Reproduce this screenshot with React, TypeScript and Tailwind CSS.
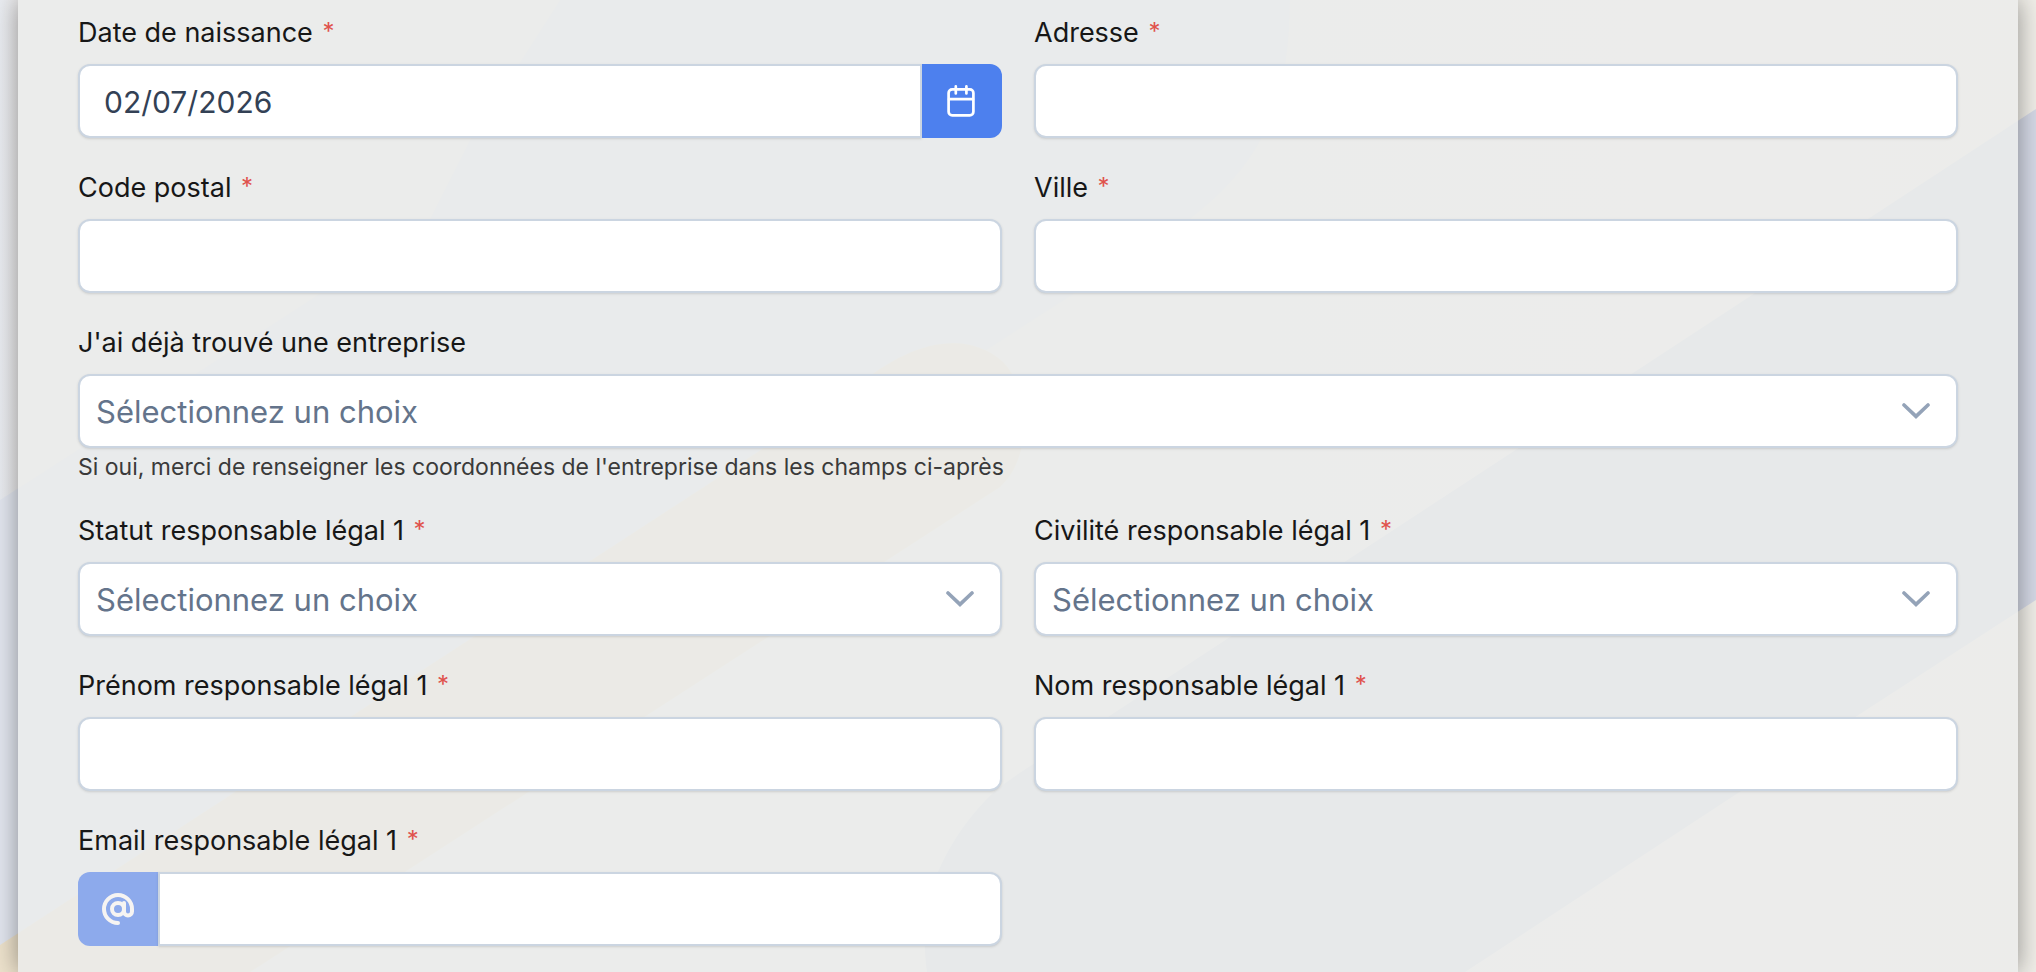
import { useId, type ReactNode } from "react";

const control =
  "h-[74px] w-full min-w-0 border-2 border-[#cbd5e1] bg-white shadow-sm outline-none";

function Backdrop() {
  return (
    <svg
      className="absolute inset-0 -z-10 h-full w-full"
      viewBox="0 0 2036 972"
      preserveAspectRatio="none"
      aria-hidden="true"
    >
      <defs>
        <linearGradient id="base" x1="0" y1="0" x2="1" y2="0">
          <stop offset="0" stopColor="#e9ecf1" />
          <stop offset="0.012" stopColor="#edebea" />
          <stop offset="0.2" stopColor="#ecebea" />
          <stop offset="0.4" stopColor="#e9edeb" />
          <stop offset="0.52" stopColor="#e9edeb" />
          <stop offset="0.62" stopColor="#eeecec" />
          <stop offset="1" stopColor="#f0eee8" />
        </linearGradient>
      </defs>
      <rect width="2036" height="972" fill="url(#base)" />
      <path
        d="M0 500 L310 300 L430 219 L470 140 L560 0 H1290 C1290 60 1280 110 1255 150 C1240 175 1215 200 1190 219 L940 380 L30 972 H0Z"
        fill="#e2e6ef"
      />
      <path
        d="M0 945 L850 392 C915 335 970 332 1003 362 C1032 392 1032 458 1000 487 L250 972 H0Z"
        fill="#ede2cc"
      />
      <path
        d="M2036 109 L1108 717 C1070 745 1034 760 995 791 C970 815 952 840 938 872 C925 902 922 935 927 972 H1465 L1741 791 L2036 600Z"
        fill="#d5d9e6"
      />
    </svg>
  );
}

function Field({
  label,
  required = true,
  wide = false,
  help,
  children,
}: {
  label: string;
  required?: boolean;
  wide?: boolean;
  help?: string;
  children: (id: string) => ReactNode;
}) {
  const id = useId();
  return (
    <div className={wide ? "col-span-2" : ""}>
      <label htmlFor={id} className="mb-2.5 block text-[27px] leading-[43px] text-[#171717]">
        {label}{" "}
        {required && (
          <span className="ml-0.5 align-[2px] text-[24px] leading-none text-[#e0524d]">*</span>
        )}
      </label>
      {children(id)}
      {help && <p className="mt-1.5 text-[23px] leading-[27px] text-[#3a3a3a]">{help}</p>}
    </div>
  );
}

function TextField({ label }: { label: string }) {
  return (
    <Field label={label}>
      {(id) => (
        <input id={id} type="text" className={`${control} rounded-xl px-6 text-[30px] text-[#334155]`} />
      )}
    </Field>
  );
}

function SelectField(props: { label: string; required?: boolean; wide?: boolean; help?: string }) {
  return (
    <Field {...props}>
      {(id) => (
        <div className="relative">
          <select
            id={id}
            className={`${control} appearance-none rounded-xl px-4 pt-0.5 text-[31px] text-[#64748b]`}
          >
            <option>Sélectionnez un choix</option>
          </select>
          <svg
            className="pointer-events-none absolute top-[29px] right-7 h-4 w-7"
            viewBox="0 0 28 16"
            fill="none"
            stroke="#94a3b8"
            strokeWidth="3.6"
            strokeLinecap="round"
            aria-hidden="true"
          >
            <path d="M2 2 L14 13.4 L26 2" />
          </svg>
        </div>
      )}
    </Field>
  );
}

export default function App() {
  return (
    <div className="relative isolate min-h-screen overflow-hidden px-[18px] font-[Inter,sans-serif]">
      <Backdrop />
      <main className="min-h-screen bg-[#ebeceb]/83 px-[60px] pt-[11px] shadow-[0_0_24px_rgba(0,0,0,0.4)]">
        <form className="grid grid-cols-2 gap-x-8 gap-y-7">
          <Field label="Date de naissance">
            {(id) => (
              <div className="flex">
                <input
                  id={id}
                  type="text"
                  defaultValue="02/07/2026"
                  className={`${control} flex-1 rounded-l-xl px-6 pt-0.5 text-[30px] text-[#334155]`}
                />
                <button
                  type="button"
                  aria-label="Choisir une date"
                  className="flex h-[74px] w-20 shrink-0 items-center justify-center rounded-r-xl bg-[#4d80ee] pr-0.5 text-white"
                >
                  <svg
                    className="h-8 w-7"
                    viewBox="0 0 28 32"
                    fill="none"
                    stroke="currentColor"
                    strokeWidth="2.7"
                    strokeLinecap="round"
                    aria-hidden="true"
                  >
                    <rect x="1.6" y="4.4" width="24.8" height="26" rx="3.6" />
                    <path d="M2 14.2H26M8.8 1.4V8.4M19.4 1.4V8.4" />
                  </svg>
                </button>
              </div>
            )}
          </Field>
          <TextField label="Adresse" />
          <TextField label="Code postal" />
          <TextField label="Ville" />
          <SelectField
            label="J'ai déjà trouvé une entreprise"
            required={false}
            wide
            help="Si oui, merci de renseigner les coordonnées de l'entreprise dans les champs ci-après"
          />
          <SelectField label="Statut responsable légal 1" />
          <SelectField label="Civilité responsable légal 1" />
          <TextField label="Prénom responsable légal 1" />
          <TextField label="Nom responsable légal 1" />
          <Field label="Email responsable légal 1">
            {(id) => (
              <div className="flex">
                <span className="flex h-[74px] w-20 shrink-0 items-center justify-center rounded-l-xl bg-[#8daaec] text-[#f6f4f2]">
                  <svg
                    className="h-8 w-8"
                    viewBox="0 0 32 32"
                    fill="none"
                    stroke="currentColor"
                    strokeWidth="4"
                    strokeLinecap="round"
                    aria-hidden="true"
                  >
                    <circle cx="16" cy="16" r="6" />
                    <path d="M22 10V18.5a4 4 0 0 0 8 0V16A14 14 0 1 0 16 30" />
                  </svg>
                </span>
                <input
                  id={id}
                  type="email"
                  className={`${control} flex-1 rounded-r-xl px-6 text-[30px] text-[#334155]`}
                />
              </div>
            )}
          </Field>
        </form>
      </main>
    </div>
  );
}
